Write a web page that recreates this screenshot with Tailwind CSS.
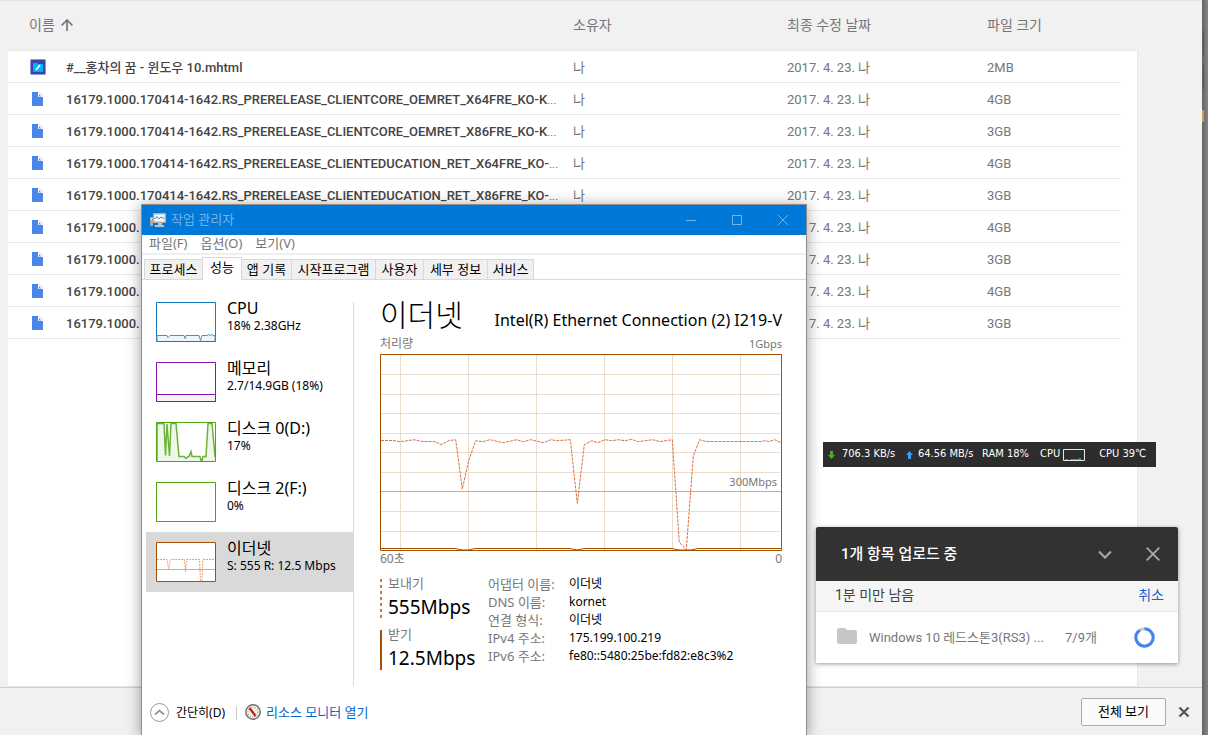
<!DOCTYPE html>
<html lang="ko">
<head>
<meta charset="utf-8">
<meta name="viewport" content="width=device-width, initial-scale=1">
<title>드라이브 및 작업 관리자</title>
<script src="https://cdn.jsdelivr.net/npm/@tailwindcss/browser@4"></script>
</head>
<body class="relative flex h-screen overflow-hidden bg-[#f1f1f1] font-[Roboto,'Noto_Sans_CJK_KR',sans-serif] text-[13px] text-[#777]">

<!-- shared symbols -->
<svg class="hidden" aria-hidden="true">
  <symbol id="file" viewBox="0 0 12 14"><path fill="#4a86e8" d="M0 0h7l4 4v10H0z"/><path fill="#fff" d="M6 0h1l5 5h-6z"/><path fill="#4a86e8" d="M7 2l2.500 2.500H7zM11 5v9h-1V5z"/></symbol>
</svg>

<div class="flex min-w-0 flex-1 flex-col border-t border-[#e4e4e4]">
  <main class="flex min-h-0 flex-1 flex-col pl-2 pr-16">
    <table class="w-full table-fixed border-separate border-spacing-0 text-left">
      <colgroup><col class="w-[58px]"><col><col class="w-[214px]"><col class="w-[200px]"><col class="w-[134px]"><col class="w-[17px]"></colgroup>
      <thead class="text-[14px]">
        <tr class="h-[50px] align-middle">
          <th colspan="2" class="border-b border-[#e8e8e8] pb-px pl-[21px] font-normal"><span class="flex items-center gap-[6px]">이름
            <svg class="size-3" viewBox="0 0 12 12" fill="none" stroke="#777" stroke-width="1.700" aria-hidden="true"><path d="M6 12V1M.7 6.300 6 1l5.300 5.300"/></svg></span></th>
          <th class="border-b border-[#e8e8e8] pb-px font-normal">소유자</th>
          <th class="border-b border-[#e8e8e8] pb-px font-normal">최종 수정 날짜</th>
          <th class="border-b border-[#e8e8e8] pb-px font-normal">파일 크기</th>
          <th class="border-b border-[#e8e8e8]"></th>
        </tr>
      </thead>
      <tbody class="bg-white">
        <tr class="h-8"><td class="border-b border-[#e8e8e8] pl-[22px]"><svg class="size-4" viewBox="0 0 16 16" aria-hidden="true"><rect x=".5" y=".5" width="15" height="15" rx="1" fill="#3646a8" stroke="#8e9bd8"/><path fill="#00b0ff" d="M3 4h4l1 1h5v8H3z"/><path stroke="#fff" stroke-width="2" d="M6 11l4-5"/></svg></td><td class="truncate border-b border-[#e8e8e8] pt-[2px] font-medium text-[#444]">#__홍차의 꿈 - 윈도우 10.mhtml</td><td class="border-b border-[#e8e8e8] pt-[2px]">나</td><td class="border-b border-[#e8e8e8] pt-[2px]">2017. 4. 23. 나</td><td class="border-b border-[#e8e8e8] pt-[2px]">2MB</td><td class="border-r border-[#e8e8e8]"></td></tr>
        <tr class="h-8"><td class="border-b border-[#e8e8e8] pl-6"><svg class="h-[14px] w-3" aria-hidden="true"><use href="#file"/></svg></td><td class="truncate border-b border-[#e8e8e8] pt-[2px] font-medium text-[#444]">16179.1000.170414-1642.RS_PRERELEASE_CLIENTCORE_OEMRET_X64FRE_KO-K<span class="font-light">...</span></td><td class="border-b border-[#e8e8e8] pt-[2px]">나</td><td class="border-b border-[#e8e8e8] pt-[2px]">2017. 4. 23. 나</td><td class="border-b border-[#e8e8e8] pt-[2px]">4GB</td><td class="border-r border-[#e8e8e8]"></td></tr>
        <tr class="h-8"><td class="border-b border-[#e8e8e8] pl-6"><svg class="h-[14px] w-3" aria-hidden="true"><use href="#file"/></svg></td><td class="truncate border-b border-[#e8e8e8] pt-[2px] font-medium text-[#444]">16179.1000.170414-1642.RS_PRERELEASE_CLIENTCORE_OEMRET_X86FRE_KO-K<span class="font-light">...</span></td><td class="border-b border-[#e8e8e8] pt-[2px]">나</td><td class="border-b border-[#e8e8e8] pt-[2px]">2017. 4. 23. 나</td><td class="border-b border-[#e8e8e8] pt-[2px]">3GB</td><td class="border-r border-[#e8e8e8]"></td></tr>
        <tr class="h-8"><td class="border-b border-[#e8e8e8] pl-6"><svg class="h-[14px] w-3" aria-hidden="true"><use href="#file"/></svg></td><td class="truncate border-b border-[#e8e8e8] pt-[2px] font-medium text-[#444]">16179.1000.170414-1642.RS_PRERELEASE_CLIENTEDUCATION_RET_X64FRE_KO-<span class="font-light">...</span></td><td class="border-b border-[#e8e8e8] pt-[2px]">나</td><td class="border-b border-[#e8e8e8] pt-[2px]">2017. 4. 23. 나</td><td class="border-b border-[#e8e8e8] pt-[2px]">4GB</td><td class="border-r border-[#e8e8e8]"></td></tr>
        <tr class="h-8"><td class="border-b border-[#e8e8e8] pl-6"><svg class="h-[14px] w-3" aria-hidden="true"><use href="#file"/></svg></td><td class="truncate border-b border-[#e8e8e8] pt-[2px] font-medium text-[#444]">16179.1000.170414-1642.RS_PRERELEASE_CLIENTEDUCATION_RET_X86FRE_KO-<span class="font-light">...</span></td><td class="border-b border-[#e8e8e8] pt-[2px]">나</td><td class="border-b border-[#e8e8e8] pt-[2px]">2017. 4. 23. 나</td><td class="border-b border-[#e8e8e8] pt-[2px]">3GB</td><td class="border-r border-[#e8e8e8]"></td></tr>
        <tr class="h-8"><td class="border-b border-[#e8e8e8] pl-6"><svg class="h-[14px] w-3" aria-hidden="true"><use href="#file"/></svg></td><td class="truncate border-b border-[#e8e8e8] pt-[2px] font-medium text-[#444]">16179.1000.</td><td class="border-b border-[#e8e8e8]"></td><td class="border-b border-[#e8e8e8] pt-[2px]">2017. 4. 23. 나</td><td class="border-b border-[#e8e8e8] pt-[2px]">4GB</td><td class="border-r border-[#e8e8e8]"></td></tr>
        <tr class="h-8"><td class="border-b border-[#e8e8e8] pl-6"><svg class="h-[14px] w-3" aria-hidden="true"><use href="#file"/></svg></td><td class="truncate border-b border-[#e8e8e8] pt-[2px] font-medium text-[#444]">16179.1000.</td><td class="border-b border-[#e8e8e8]"></td><td class="border-b border-[#e8e8e8] pt-[2px]">2017. 4. 23. 나</td><td class="border-b border-[#e8e8e8] pt-[2px]">3GB</td><td class="border-r border-[#e8e8e8]"></td></tr>
        <tr class="h-8"><td class="border-b border-[#e8e8e8] pl-6"><svg class="h-[14px] w-3" aria-hidden="true"><use href="#file"/></svg></td><td class="truncate border-b border-[#e8e8e8] pt-[2px] font-medium text-[#444]">16179.1000.</td><td class="border-b border-[#e8e8e8]"></td><td class="border-b border-[#e8e8e8] pt-[2px]">2017. 4. 23. 나</td><td class="border-b border-[#e8e8e8] pt-[2px]">4GB</td><td class="border-r border-[#e8e8e8]"></td></tr>
        <tr class="h-8"><td class="border-b border-[#e8e8e8] pl-6"><svg class="h-[14px] w-3" aria-hidden="true"><use href="#file"/></svg></td><td class="truncate border-b border-[#e8e8e8] pt-[2px] font-medium text-[#444]">16179.1000.</td><td class="border-b border-[#e8e8e8]"></td><td class="border-b border-[#e8e8e8] pt-[2px]">2017. 4. 23. 나</td><td class="border-b border-[#e8e8e8] pt-[2px]">3GB</td><td class="border-r border-[#e8e8e8]"></td></tr>
      </tbody>
    </table>
    <div class="flex-1 border-b border-r border-[#e8e8e8] bg-white"></div>
  </main>
  <footer class="flex h-12 items-center justify-end gap-3 border-t border-[#cfcfcf] pr-3">
    <button class="h-7 w-[85px] rounded-xs border border-[#ababab] bg-[#fafafa] text-[13px] text-black">전체 보기</button>
    <button aria-label="닫기"><svg class="size-3" viewBox="0 0 12 12" stroke="#555" stroke-width="2.200" aria-hidden="true"><path d="M1.500 1.500l9 9M10.500 1.500l-9 9"/></svg></button>
  </footer>
</div>

<!-- edge of the window behind -->
<div class="w-[6px] bg-linear-to-r from-[#656565] to-[#858585]" aria-hidden="true">
  <svg class="h-32 w-[6px]" viewBox="0 0 6 128" fill="none" stroke="#555"><path d="M0 20.500h1M0 31.500h1.500v23H0M0 65.500h1.500v23H0"/><path fill="#c3a54a" stroke="none" d="M0 110h2v12H0z"/></svg>
</div>

<!-- task manager window -->
<section class="absolute bottom-0 left-[141px] top-[204px] flex w-[666px] flex-col border-x border-t border-[#8c8c8c] bg-white font-['Noto_Sans','Noto_Sans_CJK_KR',sans-serif] text-xs text-black shadow-[0_2px_14px_rgba(0,0,0,0.4)]">
  <header class="flex h-[30px] shrink-0 items-center bg-[#0078d7] pb-px pl-2 text-[13px] text-[#6fb4ec]">
    <svg class="mr-[5px] size-4" viewBox="0 0 16 16" aria-hidden="true"><path fill="#a9a9a9" d="M0 5h3v9H0z"/><path fill="#e8e8e8" d="M1 6h1v2H1z"/><path fill="#d6d6d6" stroke="#b5aea5" d="M3.500 1.500h12v9h-12z"/><path fill="#f5fbff" d="M5 3h9v6H5z"/><path fill="none" stroke="#2b8fc7" d="M5 7l2-2.500 2 2.500 2-2 3 1.500"/><path fill="#c7c2bb" d="M8 11h4v2h2v2H5v-2h3z"/></svg>
    <h2 class="flex-1">작업 관리자</h2>
    <div class="flex items-center gap-9 pr-[18px]">
      <button aria-label="최소화"><svg class="block size-[10px]" viewBox="0 0 10 10" stroke="currentColor" aria-hidden="true"><path d="M0 5.500h10"/></svg></button>
      <button aria-label="최대화"><svg class="block size-[10px]" viewBox="0 0 10 10" fill="none" stroke="currentColor" aria-hidden="true"><path d="M.5.500h9v9h-9z"/></svg></button>
      <button aria-label="닫기"><svg class="block size-[10px]" viewBox="0 0 10 10" stroke="currentColor" aria-hidden="true"><path d="M0 0l10 10M10 0L0 10"/></svg></button>
    </div>
  </header>
  <nav class="flex h-5 shrink-0 items-center gap-[13px] border-b-2 border-[#efefef] pl-[7px] text-[13px] text-[#777]">
    <button>파일(F)</button><button>옵션(O)</button><button>보기(V)</button>
  </nav>
  <div role="tablist" class="flex h-[25px] shrink-0 items-end border-b border-[#d9d9d9] pl-[2px] text-[13px] leading-none">
    <button role="tab" class="h-5 w-[58px] border-l border-t border-[#d9d9d9] bg-[#f0f0f0]">프로세스</button>
    <button role="tab" aria-selected="true" class="-mb-px h-[23px] w-10 border-x border-t border-[#d9d9d9] bg-white pb-1">성능</button>
    <button role="tab" class="h-5 w-[50px] border-r border-t border-[#d9d9d9] bg-[#f0f0f0]">앱 기록</button>
    <button role="tab" class="h-5 w-[84px] border-r border-t border-[#d9d9d9] bg-[#f0f0f0]">시작프로그램</button>
    <button role="tab" class="h-5 w-12 border-r border-t border-[#d9d9d9] bg-[#f0f0f0]">사용자</button>
    <button role="tab" class="h-5 w-16 border-r border-t border-[#d9d9d9] bg-[#f0f0f0]">세부 정보</button>
    <button role="tab" class="h-5 w-[46px] border-r border-t border-[#d9d9d9] bg-[#f0f0f0]">서비스</button>
  </div>

  <div class="flex min-h-0 flex-1 pt-3">
    <ul class="w-[211px] shrink-0 pl-1 leading-4">
      <li class="flex h-[60px] gap-[11px] pl-[10px] pt-[10px]">
        <svg class="h-10 w-[60px]" viewBox="0 0 60 40" aria-hidden="true"><path fill="#fff" stroke="#117dbb" d="M.5.500h59v39H.5z"/><path fill="#eef5fa" stroke="#3f97c9" d="M1 39V33.500h10l1 2 2-2h14l1 3 1-3h13l1.500 5 1.500-5h5l2-1 1.500 1 1.500-1 1.500 1H59V39"/></svg>
        <div class="-mt-1"><p class="text-base leading-5">CPU</p><p>18% 2.38GHz</p></div>
      </li>
      <li class="flex h-[60px] gap-[11px] pl-[10px] pt-[10px]">
        <svg class="h-10 w-[60px]" viewBox="0 0 60 40" aria-hidden="true"><path fill="#fff" stroke="#8b12ae" d="M.5.500h59v39H.5z"/><path fill="#f4f2f4" stroke="#8b12ae" d="M.5 32.500h59v7H.5z"/></svg>
        <div class="-mt-1"><p class="text-base leading-5">메모리</p><p>2.7/14.9GB (18%)</p></div>
      </li>
      <li class="flex h-[60px] gap-[11px] pl-[10px] pt-[10px]">
        <svg class="h-10 w-[60px]" viewBox="0 0 60 40" aria-hidden="true"><path fill="#fff" d="M0 0h60v40H0z"/><path fill="#eff6ea" stroke="#6ab438" stroke-width="1.500" d="M1 39V1.500h7l1.500 32L11 2l2.500 32L15 1.500h5L23 34.500h5l2 2 2-2h1l2-5 1 5h8l1 4h1l1-4h3l2-33h4l3 33h2V39"/><path fill="none" stroke="#4da60c" d="M.5.500h59v39H.5z"/></svg>
        <div class="-mt-1"><p class="text-base leading-5">디스크 0(D:)</p><p>17%</p></div>
      </li>
      <li class="flex h-[60px] gap-[11px] pl-[10px] pt-[10px]">
        <svg class="h-10 w-[60px]" viewBox="0 0 60 40" aria-hidden="true"><path fill="#fff" stroke="#4da60c" d="M.5.500h59v39H.5z"/></svg>
        <div class="-mt-1"><p class="text-base leading-5">디스크 2(F:)</p><p>0%</p></div>
      </li>
      <li class="flex h-[60px] gap-[11px] bg-[#d9d9d9] pl-[10px] pt-[10px]" aria-current="true">
        <svg class="h-10 w-[60px]" viewBox="0 0 60 40" aria-hidden="true"><path fill="#fff" d="M0 0h60v40H0z"/><path fill="none" stroke="#cfae8c" d="M1 27.500h58"/><path fill="none" stroke="#ee9a72" stroke-dasharray="2 1" d="M1 17.500h10l1.500 9 2-9h14l1 12 1-12h13l1 21h1.500l1-21H59"/><path fill="none" stroke="#a74f01" d="M.5.500h59v39H.5z"/></svg>
        <div class="-mt-1"><p class="text-base leading-5">이더넷</p><p class="whitespace-nowrap">S: 555 R: 12.5 Mbps</p></div>
      </li>
    </ul>
    <div class="mb-[4px] mt-[10px] w-px shrink-0 bg-[#d9d9d9]"></div>

    <div class="flex min-w-0 flex-1 flex-col pl-[26px] pr-6 pt-2 text-[#777]">
      <div class="mb-[6px] flex items-end justify-between whitespace-nowrap text-black">
        <h3 class="text-[30px] font-light leading-[30px]">이더넷</h3>
        <p class="text-base leading-5">Intel(R) Ethernet Connection (2) I219-V</p>
      </div>
      <div class="flex justify-between leading-4"><span>처리량</span><span class="text-[11px]">1Gbps</span></div>
      <div class="relative mt-[2px]">
        <svg class="block w-full" viewBox="0 0 402 197" fill="none" role="img" aria-label="이더넷 처리량 그래프">
          <path stroke="#ecdccd" d="M1 20.500h399M1 40.500h399M1 59.500h399M1 79.500h399M1 98.500h399M1 118.500h399M1 157.500h399M1 177.500h399M20.500 1v195M88.500 1v195M156.500 1v195M224.500 1v195M292.500 1v195M360.500 1v195"/>
          <path stroke="#d9a683" d="M1 137.500h400"/>
          <path stroke="#e0703c" stroke-dasharray="3 1" d="M1 86.500H13L20.700 87.700 34 85.700 40.700 87.300 55 87.700 61.300 90.700 68.700 86.700 75.700 85.700 82.300 135 88.700 106.700 95.700 86.700 102.700 87.700 110 85.700 122.700 88.700 130 87.300 136.700 85.700 143.300 87.700 150.700 85.700 163.300 88.700 171 85.700 176.700 86.700 190.300 85.700 197.300 149.300 204.300 90.700 211.700 86.700 217.700 88.700 225 85.700 231.700 86.700 238.700 85.700 244.700 86.700 251.700 85.300 258.300 87.700 272.700 85.700 280 87.700 292.300 85.700 299.300 188.300 306.300 195.700 313.300 102 319.700 85.700 326 87.500H380L386.700 86.700 388 87.700 394.700 85.700 401 88.700"/>
          <path stroke="#a74f01" d="M1 194.500h74l7 1.500h6l7-1.500h95l7 1.500 7-1.500h88l7 1.500h12l7-1.500h83"/>
          <path stroke="#a74f01" d="M.5.500h401v196H.5z"/>
        </svg>
        <span class="absolute bottom-[61px] right-[5px] text-[11px] leading-4">300Mbps</span>
      </div>
      <div class="flex justify-between leading-4"><span>60초</span><span>0</span></div>
      <div class="mt-2 flex gap-3 whitespace-nowrap">
        <div class="flex w-24 flex-col gap-[3px]">
          <div class="flex gap-[6px]"><svg class="mt-1 h-10 w-[2px] shrink-0" viewBox="0 0 2 40" aria-hidden="true"><path stroke="#e0703c" stroke-width="2" stroke-dasharray="3 3" d="M1 0v40"/></svg><div><p class="text-[13px] leading-4">보내기</p><p class="text-[19px] leading-8 text-black">555Mbps</p></div></div>
          <div class="flex gap-[6px]"><div class="mt-1 h-10 w-[2px] shrink-0 bg-[#a74f01]"></div><div><p class="text-[13px] leading-4">받기</p><p class="text-[19px] leading-8 text-black">12.5Mbps</p></div></div>
        </div>
        <dl class="grid auto-rows-[18px] grid-cols-[81px_auto] leading-[18px]">
          <dt class="text-[13px]">어댑터 이름:</dt><dd class="text-black">이더넷</dd>
          <dt class="text-[13px]">DNS 이름:</dt><dd class="text-black">kornet</dd>
          <dt class="text-[13px]">연결 형식:</dt><dd class="text-black">이더넷</dd>
          <dt class="text-[13px]">IPv4 주소:</dt><dd class="text-black">175.199.100.219</dd>
          <dt class="text-[13px]">IPv6 주소:</dt><dd class="text-black">fe80::5480:25be:fd82:e8c3%2</dd>
        </dl>
      </div>
    </div>
  </div>

  <div class="flex h-[45px] shrink-0 items-center pl-2 text-xs">
    <button class="flex items-center gap-[7px]"><svg class="size-[19px]" viewBox="0 0 19 19" fill="none" stroke="#999" aria-hidden="true"><circle cx="9.500" cy="9.500" r="9"/><path stroke-width="2" d="M5 11.500l4.500-4 4.500 4"/></svg>간단히(D)</button>
    <span class="ml-[11px] mr-2 h-[14px] w-px bg-[#ccc]"></span>
    <a href="#" class="flex items-center gap-[5px] text-[13px] text-[#0066cc]"><svg class="size-4" viewBox="0 0 16 16" aria-hidden="true"><circle cx="8" cy="8" r="7.200" fill="#f3efe9" stroke="#77716c" stroke-width="1.500"/><circle cx="8" cy="8" r="5" fill="none" stroke="#8a8a8a" stroke-dasharray="1 1.500"/><path stroke="#c51a1a" stroke-width="2.200" d="M4.500 4l6 8"/></svg>리소스 모니터 열기</a>
  </div>
</section>

<!-- floating traffic monitor -->
<aside class="absolute left-[823px] top-[442px] flex h-[25px] w-[333px] items-center whitespace-nowrap bg-[#2d2d2d] pl-[5px] font-['DejaVu_Sans_Condensed','Noto_Sans_CJK_KR',sans-serif] text-[11px] text-white">
  <svg class="mr-[7px] h-2 w-[7px]" viewBox="0 0 7 8" fill="#3cb41e" aria-hidden="true"><path d="M2 0h3v4h2L3.500 8 0 4h2z"/></svg><span class="w-[64px]">706.3 KB/s</span>
  <svg class="mr-[5px] h-2 w-[7px]" viewBox="0 0 7 8" fill="#3c9bf0" aria-hidden="true"><path d="M2 8h3V4h2L3.500 0 0 4h2z"/></svg><span class="w-[64px]">64.56 MB/s</span>
  <span class="w-[58px]">RAM 18%</span>
  <span>CPU</span><svg class="ml-[3px] mr-[14px] h-3 w-[22px]" viewBox="0 0 22 12" aria-hidden="true"><path fill="none" stroke="#e8e8e8" d="M.5.500h21v11H.5z"/><path fill="#00a2e8" d="M2 10h3v1H2zM7 10h9V9h2v2H7z"/></svg>
  <span>CPU 39℃</span>
</aside>

<!-- upload progress -->
<section class="absolute left-[816px] top-[527px] w-[362px] rounded-t-xs bg-white shadow-[0_1px_4px_rgba(0,0,0,0.4)]">
  <header class="flex h-[54px] items-center rounded-t-xs bg-[#323232] pl-[25px] pr-[18px] text-white">
    <h2 class="flex-1 text-[15px] font-medium">1개 항목 업로드 중</h2>
    <button class="mr-[34px]" aria-label="최소화"><svg class="block h-[9px] w-[14px]" viewBox="0 0 14 9" fill="none" stroke="#aaa" stroke-width="2" aria-hidden="true"><path d="M1 1.500l6 6 6-6"/></svg></button>
    <button aria-label="닫기"><svg class="block size-[14px]" viewBox="0 0 14 14" stroke="#aaa" stroke-width="1.800" aria-hidden="true"><path d="M.7.700l12.600 12.600M13.300.700L.7 13.300"/></svg></button>
  </header>
  <div class="flex h-[31px] items-center justify-between border-b border-[#e5e5e5] bg-[#f5f5f5] pb-[2px] pl-[19px] pr-[14px] text-[14px] text-[#444]"><span>1분 미만 남음</span><button class="text-[#1a5fd0]">취소</button></div>
  <div class="flex h-[51px] items-center pl-[21px] pr-[23px]">
    <svg class="mb-[3px] mr-3 h-4 w-5" viewBox="0 0 20 16" fill="#c6c6c6" aria-hidden="true"><path d="M2 0h6l2 2h8q2 0 2 2v10q0 2-2 2H2q-2 0-2-2V2Q0 0 2 0z"/></svg>
    <span class="flex-1">Windows 10 레드스톤3(RS3) ...</span>
    <span class="w-[69px]">7/9개</span>
    <svg class="size-[21px]" viewBox="0 0 21 21" fill="none" stroke-width="3" aria-hidden="true"><circle cx="10.500" cy="10.500" r="8.700" stroke="#ccc"/><circle cx="10.500" cy="10.500" r="8.700" stroke="#4285f4" pathLength="100" stroke-dasharray="91 9" transform="rotate(-90 10.500 10.500)"/></svg>
  </div>
</section>
</body>
</html>
